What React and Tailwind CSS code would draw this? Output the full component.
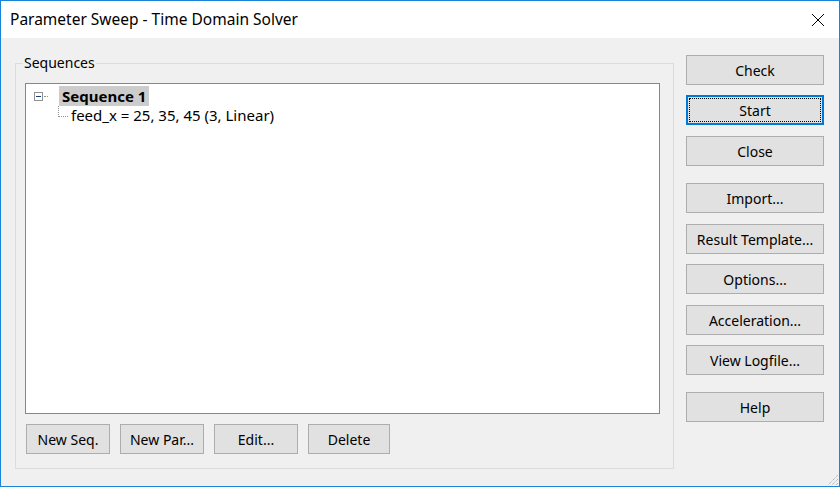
const font = { fontFamily: '"Noto Sans", "Open Sans", sans-serif' }

function Btn({ children, className = '', focused = false }) {
  if (focused) {
    return (
      <div className={`h-[30px] border-2 border-[#0078d7] bg-[#e1e1e1] p-px ${className}`}>
        <div className="h-full w-full border border-dotted border-black flex items-center justify-center text-[14px] text-black">
          {children}
        </div>
      </div>
    )
  }
  return (
    <div className={`h-[30px] border border-[#adadad] bg-[#e1e1e1] flex items-center justify-center text-[14px] text-black ${className}`}>
      {children}
    </div>
  )
}

function CloseIcon() {
  return (
    <svg width="14" height="14" viewBox="0 0 14 14">
      <path d="M1 1 L13 13 M13 1 L1 13" stroke="#000" strokeWidth="1" />
    </svg>
  )
}

// Sequence tree with dotted connector lines
function SequenceTree() {
  return (
    <div className="pt-[2px] pl-[8px]">
      <div className="flex items-center h-[20px]">
        <div className="w-[9px] h-[9px] border border-[#919191] bg-white flex items-center justify-center">
          <div className="w-[5px] h-px bg-[#1c3d80]" />
        </div>
        <div className="w-[4px] border-t border-dotted border-[#919191] ml-px" />
        <div className="ml-[11px] bg-[#cccccc] px-[3px] h-[20px] flex items-center font-bold text-[15px] text-black">
          Sequence 1
        </div>
      </div>
      <div className="flex items-start h-[20px] pl-[24px]">
        <div className="w-[10px] h-[11px] border-l border-b border-dotted border-[#919191]" />
        <span className="ml-[3px] text-[15px] leading-[20px] text-black -mt-px">feed_x = 25, 35, 45 (3, Linear)</span>
      </div>
    </div>
  )
}

export default function App() {
  return (
    <div style={font} className="w-[840px] h-[487px] border border-[#1883d7] flex flex-col bg-[#f0f0f0] relative">
      {/* title bar */}
      <div className="h-[37px] bg-white flex items-center justify-between pl-[9px] pr-[14px]">
        <span className="text-[15.5px] text-black">Parameter Sweep - Time Domain Solver</span>
        <CloseIcon />
      </div>

      <div className="flex-1 flex pl-[14px]">
        {/* Sequences group */}
        <fieldset className="w-[659px] h-[415px] mt-[16px] border border-[#dcdcdc] pl-[9px] pr-[13px] pb-[9px]">
          <legend className="px-[1px] -ml-[2px] text-[14px] leading-[18px] text-black">Sequences</legend>
          <div className="mt-[11px] h-[331px] border border-[#828790] bg-white">
            <SequenceTree />
          </div>
          <div className="flex gap-[10px] mt-[10px] ml-px">
            <Btn className="w-[84px]">New Seq.</Btn>
            <Btn className="w-[84px]">New Par...</Btn>
            <Btn className="w-[84px]">Edit...</Btn>
            <Btn className="w-[82px]">Delete</Btn>
          </div>
        </fieldset>

        {/* right button column */}
        <div className="ml-[12px] w-[138px] flex flex-col pt-[17px]">
          <Btn>Check</Btn>
          <Btn focused className="mt-[10px]">Start</Btn>
          <Btn className="mt-[11px]">Close</Btn>
          <Btn className="mt-[17px]">Import...</Btn>
          <Btn className="mt-[11px]">Result Template...</Btn>
          <Btn className="mt-[10px]">Options...</Btn>
          <Btn className="mt-[11px]">Acceleration...</Btn>
          <Btn className="mt-[10px]">View Logfile...</Btn>
          <Btn className="mt-[17px]">Help</Btn>
        </div>
      </div>

      {/* resize grip */}
      <svg className="absolute right-0 bottom-0" width="14" height="14" viewBox="0 0 14 14">
        <path d="M13 3 L3 13 M13 7 L7 13 M13 11 L11 13" stroke="#a0a0a0" strokeWidth="1" strokeDasharray="1 1" />
      </svg>
    </div>
  )
}
